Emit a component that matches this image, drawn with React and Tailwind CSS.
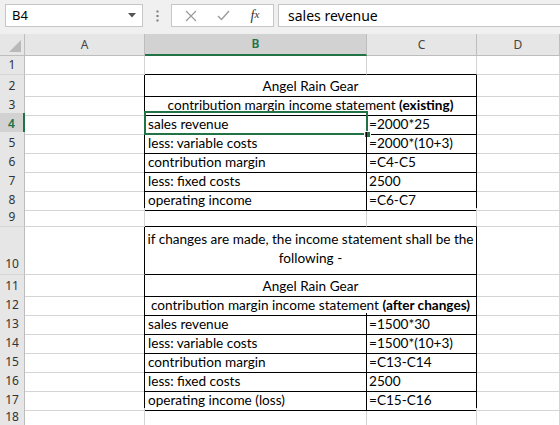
import React from "react";

const G = "grid grid-cols-[25px_120px_222px_110px_1fr]";
const cellFont = { fontFamily: "Lato, 'Liberation Sans', sans-serif" };

function RowHead({ n, sel, tall }) {
  return (
    <div
      className={
        "flex justify-center border-b border-b-[#d5d5d5] text-[12px] " +
        (tall ? "items-end pb-[1px] " : "items-center ") +
        (sel
          ? "bg-[#d2d2d2] text-[#217346] font-semibold border-r-2 border-r-[#217346]"
          : "bg-[#e6e6e6] text-[#333] border-r border-r-[#bdbdbd]")
      }
      style={{ fontFamily: "'Noto Sans', 'Open Sans', sans-serif" }}
    >
      {n}
    </div>
  );
}

function Plain({ extra = "" }) {
  return <div className={"border-r border-b border-[#d4d4d4] " + extra}></div>;
}

function Row({ n, children, h = "h-[19px]", sel, tall }) {
  return (
    <div className={G + " " + h}>
      <RowHead n={n} sel={sel} tall={tall} />
      {children}
    </div>
  );
}

function DataRow({ n, label, val, sel }) {
  return (
    <Row n={n} sel={sel}>
      <Plain extra="border-r-black" />
      <div className="relative flex items-center border-r border-b border-black pl-[3px] pt-[1px] text-[13.6px] text-black whitespace-nowrap" style={cellFont}>
        {label}
        {sel && (
          <div className="absolute -top-[2px] -left-[1px] right-[-2px] bottom-[-1px] border-2 border-[#217346]">
            <div className="absolute right-[-5px] bottom-[-5px] w-[7px] h-[7px] bg-[#217346] border border-white"></div>
          </div>
        )}
      </div>
      <div className="flex items-center border-r border-b border-black pl-[2px] pt-[1px] text-[13.6px] text-black whitespace-nowrap" style={cellFont}>
        {val}
      </div>
      <Plain />
    </Row>
  );
}

function MergedRow({ n, children, h, tall }) {
  return (
    <Row n={n} h={h} tall={tall}>
      <Plain extra="border-r-black" />
      <div
        className={
          "col-span-2 flex justify-center text-center border-r border-b border-black text-[13.6px] text-black px-[2px] " +
          (tall ? "items-end pb-[6px] leading-[19px] whitespace-normal" : "items-center pt-[1px] whitespace-nowrap")
        }
        style={cellFont}
      >
        {children}
      </div>
      <Plain />
    </Row>
  );
}

function EmptyRow({ n, tableBelow }) {
  return (
    <Row n={n}>
      <Plain />
      <Plain extra={tableBelow ? "border-b-black" : ""} />
      <Plain extra={tableBelow ? "border-b-black" : ""} />
      <Plain />
    </Row>
  );
}

export default function App() {
  return (
    <div className="w-[560px] h-[425px] overflow-hidden bg-white">
      {/* toolbar */}
      <div className="h-[34px] bg-[#f0f0f0] flex items-start pt-[4px]">
        <div className="ml-[5px] w-[138px] h-[23px] bg-white border border-[#c6c6c6] flex items-center justify-between pl-[6px] pr-[6px]">
          <span className="text-[13px] text-black" style={{ fontFamily: "'Noto Sans', 'Open Sans', sans-serif" }}>B4</span>
          <svg width="8" height="5" viewBox="0 0 8 5"><path d="M0 0 H8 L4 4.5 Z" fill="#555" /></svg>
        </div>
        <div className="w-[28px] h-[23px] flex items-center justify-center">
          <svg width="3" height="12" viewBox="0 0 3 12">
            <rect x="0.5" y="0.5" width="2" height="2" fill="#777" />
            <rect x="0.5" y="5" width="2" height="2" fill="#777" />
            <rect x="0.5" y="9.5" width="2" height="2" fill="#777" />
          </svg>
        </div>
        <div className="w-[103px] h-[23px] bg-white border border-[#c6c6c6] flex items-center">
          <div className="w-[37px] flex justify-center">
            <svg width="12" height="12" viewBox="0 0 12 12"><path d="M1 1 L11 11 M11 1 L1 11" stroke="#9b9b9b" strokeWidth="1.2" /></svg>
          </div>
          <div className="w-[28px] flex justify-center">
            <svg width="13" height="11" viewBox="0 0 13 11"><path d="M1 6 L4.5 9.5 L12 1" stroke="#9b9b9b" strokeWidth="1.4" fill="none" /></svg>
          </div>
          <div className="flex-1 flex justify-center text-[#333] italic text-[14px]" style={{ fontFamily: "'Liberation Serif', serif" }}>
            f<span className="text-[11px] translate-y-[1px]">x</span>
          </div>
        </div>
        <div className="ml-[4px] flex-1 h-[23px] bg-white border border-[#c6c6c6] border-r-0 flex items-center pl-[9px] text-black" style={{ fontFamily: "'Noto Sans', 'Open Sans', sans-serif" }}>
          <span className="text-[14px]">sales revenue</span>
        </div>
      </div>
      {/* column headers */}
      <div className={G + " h-[22px] bg-[#e6e6e6] text-[12px] text-[#444]"} style={{ fontFamily: "'Noto Sans', 'Open Sans', sans-serif" }}>
        <div className="relative border-r border-b border-[#bdbdbd]">
          <svg className="absolute right-[3px] bottom-[3px]" width="12" height="12" viewBox="0 0 12 12"><path d="M12 0 V12 H0 Z" fill="#b9b9b9" /></svg>
        </div>
        <div className="flex items-center justify-center border-r border-b border-[#bdbdbd]">A</div>
        <div className="flex items-center justify-center bg-[#d2d2d2] border-r border-r-[#bdbdbd] border-b-2 border-b-[#217346] text-[#217346] font-semibold">B</div>
        <div className="flex items-center justify-center border-r border-b border-[#bdbdbd]">C</div>
        <div className="flex items-center justify-center border-r border-b border-[#bdbdbd]">D</div>
      </div>
      {/* rows */}
      <EmptyRow n={1} tableBelow />
      <MergedRow n={2}>Angel Rain Gear</MergedRow>
      <MergedRow n={3}>
        <span>contribution margin income statement <b>(existing)</b></span>
      </MergedRow>
      <DataRow n={4} sel label="sales revenue" val="=2000*25" />
      <DataRow n={5} label="less: variable costs" val="=2000*(10+3)" />
      <DataRow n={6} label="contribution margin" val="=C4-C5" />
      <DataRow n={7} label="less: fixed costs" val="2500" />
      <DataRow n={8} label="operating income" val="=C6-C7" />
      <EmptyRow n={9} tableBelow />
      <MergedRow n={10} h="h-[48px]" tall>
        <span>if changes are made, the income statement shall be the following -</span>
      </MergedRow>
      <MergedRow n={11}>Angel Rain Gear</MergedRow>
      <MergedRow n={12}>
        <span>contribution margin income statement <b>(after changes)</b></span>
      </MergedRow>
      <DataRow n={13} label="sales revenue" val="=1500*30" />
      <DataRow n={14} label="less: variable costs" val="=1500*(10+3)" />
      <DataRow n={15} label="contribution margin" val="=C13-C14" />
      <DataRow n={16} label="less: fixed costs" val="2500" />
      <DataRow n={17} label="operating income (loss)" val="=C15-C16" />
      <EmptyRow n={18} />
    </div>
  );
}
